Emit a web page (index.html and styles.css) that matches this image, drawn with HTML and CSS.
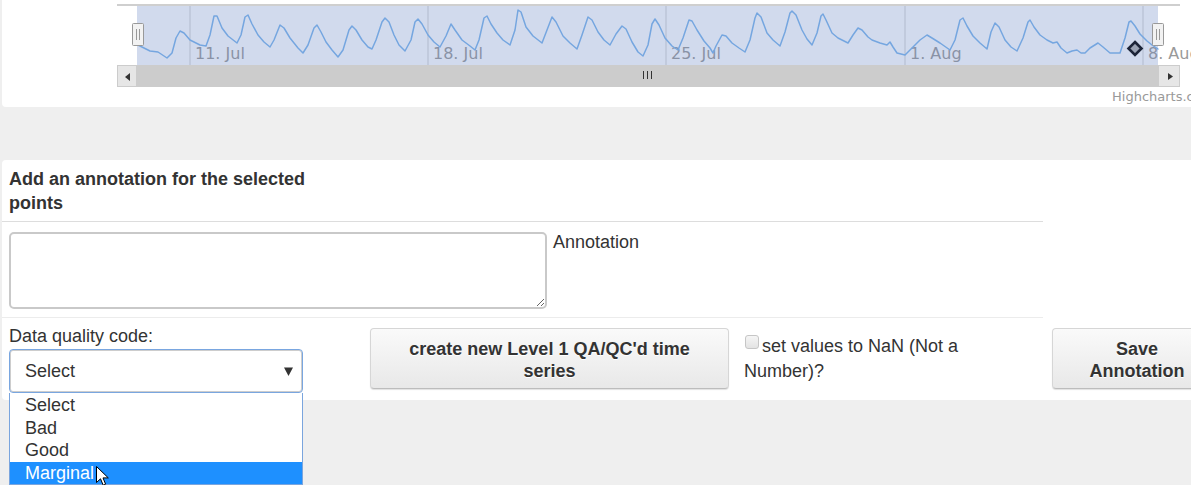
FILE: index.html
```html
<!DOCTYPE html>
<html>
<head>
<meta charset="utf-8">
<title>Annotation</title>
<link rel="stylesheet" href="styles.css">
</head>
<body>
<div class="chart-panel">
  <svg class="nav" width="1189" height="107" viewBox="2 0 1189 107" xmlns="http://www.w3.org/2000/svg">
    <path class="outline" d="M117 5 H1180"/>
    <g class="grid">
      <path d="M190 6 V65"/>
      <path d="M428 6 V65"/>
      <path d="M666 6 V65"/>
      <path d="M905 6 V65"/>
      <path d="M1143 6 V65"/>
    </g>
    <text class="axis-label" x="195" y="59">11. Jul</text>
    <text class="axis-label" x="433" y="59">18. Jul</text>
    <text class="axis-label" x="671" y="59">25. Jul</text>
    <text class="axis-label" x="910" y="59">1. Aug</text>
    <text class="axis-label" x="1148" y="59">8. Aug</text>
    <polyline class="series" points="138,45 142,47 146,49 150,51 158,52 167,58 172,53 176,38 180,31 184,33 190,40 200,45 206,46 210,35 214,16 217,16 222,28 228,36 237,43 241,35 245,17 248,15 252,24 258,35 264,42 270,47 274,40 280,25 284,28 290,38 298,48 303,53 308,45 314,28 317,25 321,32 326,42 332,50 338,57 343,50 349,30 352,26 356,30 362,40 368,47 372,49 376,40 382,22 385,18 389,22 394,35 399,45 405,51 411,40 415,22 418,19 422,24 428,35 434,42 440,47 446,36 451,24 455,30 462,40 470,46 475,50 479,40 484,18 487,16 491,24 497,33 503,40 510,45 515,30 518,10 521,12 526,27 533,36 542,43 547,30 552,17 556,22 563,36 570,43 577,49 582,35 588,17 592,20 598,32 604,40 610,45 616,34 622,26 626,29 632,42 638,52 643,56 648,45 652,24 655,19 659,25 665,38 672,46 678,50 683,38 689,20 692,21 697,30 704,41 710,48 713,53 716,46 722,35 726,36 732,43 739,48 745,52 750,40 755,18 757,13 761,17 767,33 773,40 780,46 785,32 790,13 792,11 796,15 802,30 807,39 812,45 817,33 821,16 823,14 826,20 832,33 838,38 848,43 853,35 858,28 862,30 868,37 872,40 880,43 887,45 890,42 893,47 897,53 905,55 912,48 920,40 927,35 932,38 940,43 950,50 955,40 960,20 963,18 967,26 973,36 980,43 987,49 991,32 995,23 999,27 1005,40 1011,47 1017,51 1023,38 1028,22 1030,20 1034,27 1040,35 1047,40 1053,43 1057,42 1061,48 1067,53 1072,51 1077,50 1081,53 1085,53 1090,48 1098,43 1103,47 1110,53 1120,53 1125,38 1129,22 1131,21 1135,26 1140,34 1147,41 1152,45 1158,49"/>
    <rect class="mask" x="137" y="6" width="1021" height="59"/>
    <path class="marker" d="M1135 42 L1141.5 48.5 L1135 55 L1128.5 48.5 Z"/>
    <g class="handle">
      <rect x="132.5" y="23.5" width="11" height="22" rx="1"/>
      <path d="M136.5 29 V40 M139.5 29 V40"/>
    </g>
    <g class="handle">
      <rect x="1152.5" y="23.5" width="11" height="22" rx="1"/>
      <path d="M1156.5 29 V40 M1159.5 29 V40"/>
    </g>
    <rect class="sb-track" x="137" y="65" width="1021" height="22"/>
    <rect class="sb-button" x="117.5" y="65.5" width="19" height="21"/>
    <rect class="sb-button" x="1158.5" y="65.5" width="21" height="21"/>
    <polygon class="sb-arrow" points="125,77 130,73 130,81"/>
    <polygon class="sb-arrow" points="1168,73 1173,76.5 1168,80"/>
    <path class="rifle" d="M643.5 71 V79 M647.5 71 V79 M651.5 71 V79"/>
    <text class="credit" x="1112" y="101">Highcharts.com</text>
  </svg>
</div>

<div class="annot-panel">
  <h4 class="annot-title">Add an annotation for the selected points</h4>
  <div class="rule"></div>
  <div class="row-text">
    <textarea class="annot-input"></textarea>
    <label class="annot-label">Annotation</label>
  </div>
  <div class="rule rule-light"></div>
  <div class="row-controls">
    <div class="col-quality">
      <div class="field-label">Data quality code:</div>
      <div class="select-box">
        <span>Select</span>
        <svg class="caret" width="9" height="9" viewBox="0 0 9 9"><polygon points="0,0.5 9,0.5 4.5,9"/></svg>
      </div>
    </div>
    <button class="btn btn-create">create new Level 1 QA/QC'd time series</button>
    <div class="col-nan"><span class="check"></span>set values to NaN (Not a Number)?</div>
    <button class="btn btn-save">Save Annotation</button>
  </div>
  <ul class="dropdown">
    <li>Select</li>
    <li>Bad</li>
    <li>Good</li>
    <li class="active">Marginal</li>
  </ul>
</div>

<svg class="cursor" width="14" height="22" viewBox="0 0 14 22">
  <path d="M0.5 0.5 L0.5 16.5 L4.5 12.8 L7.2 19.2 L9.6 18.2 L7 11.9 L12.3 11.9 Z"/>
</svg>
</body>
</html>
```

FILE: styles.css
```css
html, body {
  margin: 0;
  height: 100%;
  overflow: hidden;
}

body {
  background: #efefef;
  padding-left: 2px;
  font-family: "Liberation Sans", Arial, sans-serif;
  font-size: 18px;
  color: #333;
}

/* ---------- chart navigator ---------- */
.chart-panel {
  background: #fff;
  height: 107px;
  border-radius: 0 0 0 4px;
}

.nav {
  display: block;
}

.outline {
  stroke: #cfcfcf;
  stroke-width: 2;
  fill: none;
}

.grid path {
  stroke: #e3e3e3;
  stroke-width: 1.6;
  fill: none;
}

.axis-label {
  font-family: "DejaVu Sans", sans-serif;
  font-size: 16px;
  fill: #999;
}

.series {
  fill: none;
  stroke: #7cb5ec;
  stroke-width: 1.5;
  stroke-linejoin: round;
  stroke-linecap: round;
}

.mask {
  fill: rgba(102, 133, 194, 0.3);
}

.marker {
  fill: #9aa2b3;
  stroke: #1c2438;
  stroke-width: 2.6;
  stroke-linejoin: miter;
}

.handle rect {
  fill: #f2f2f2;
  stroke: #999;
  stroke-width: 1;
}

.handle path {
  stroke: #999;
  stroke-width: 1;
  fill: none;
}

.sb-track {
  fill: #cccccc;
}

.sb-button {
  fill: #e6e6e6;
  stroke: #cccccc;
  stroke-width: 1;
}

.sb-arrow {
  fill: #333;
}

.rifle {
  stroke: #333;
  stroke-width: 1;
  fill: none;
}

.credit {
  font-family: "DejaVu Sans", sans-serif;
  font-size: 13px;
  fill: #999;
}

/* ---------- annotation panel ---------- */
.annot-panel {
  position: relative;
  margin-top: 53px;
  height: 240px;
  box-sizing: border-box;
  padding-top: 7px;
  background: #fff;
  border-radius: 4px 0 0 4px;
}

.annot-title {
  margin: 0 0 0 7px;
  width: 330px;
  font-size: 18px;
  line-height: 24px;
  font-weight: bold;
  color: #333;
}

.rule {
  margin-top: 6px;
  width: 1041px;
  height: 1px;
  background: #dddddd;
}

.rule-light {
  margin-top: 8px;
  background: #ececec;
}

.row-text {
  display: flex;
  align-items: flex-start;
  margin: 10px 0 0 7px;
}

.annot-input {
  display: block;
  width: 538px;
  height: 77px;
  box-sizing: border-box;
  margin: 0;
  padding: 6px 12px;
  border: 2px solid #c9c9c9;
  border-radius: 5px;
  font: inherit;
  background: #fff;
}

.annot-label {
  margin-left: 6px;
  line-height: 20px;
}

.row-controls {
  display: flex;
  align-items: flex-start;
  margin-left: 7px;
  padding-top: 6px;
}

.row-controls > * {
  flex-shrink: 0;
}

.col-quality {
  width: 294px;
}

.field-label {
  line-height: 25px;
}

.select-box {
  display: flex;
  align-items: center;
  justify-content: space-between;
  height: 44px;
  box-sizing: border-box;
  padding: 0 9px 0 15px;
  border: 1px solid #79a6e0;
  border-radius: 4px;
  box-shadow: inset 0 0 0 1px #cdcdcd;
  background: #fff;
  line-height: 22px;
}

.caret {
  display: block;
  fill: #333;
}

.btn {
  height: 61px;
  box-sizing: border-box;
  margin-top: 4px;
  padding: 9px 16px 6px;
  font-family: "Liberation Sans", Arial, sans-serif;
  font-size: 18px;
  line-height: 22px;
  font-weight: bold;
  color: #333;
  text-align: center;
  text-shadow: 0 1px 0 #fff;
  background: linear-gradient(#fafafa, #e8e8e8);
  border: 1px solid #d6d6d6;
  border-bottom-color: #bcbcbc;
  border-radius: 4px;
  box-shadow: 0 1px 1px rgba(0, 0, 0, 0.12);
}

.btn-create {
  width: 359px;
  margin-left: 67px;
}

.col-nan {
  width: 290px;
  margin-left: 15px;
  margin-top: 10px;
  line-height: 25px;
}

.check {
  display: inline-block;
  width: 14px;
  height: 14px;
  box-sizing: border-box;
  margin: 0 3px 0 1px;
  vertical-align: 3px;
  border: 1px solid #c6c6c6;
  border-radius: 3px;
  background: linear-gradient(#f5f5f5, #e3e3e3);
}

.btn-save {
  width: 170px;
  margin-left: 18px;
}

/* ---------- open dropdown ---------- */
.dropdown {
  position: absolute;
  left: 7px;
  top: 233px;
  width: 294px;
  box-sizing: border-box;
  margin: 0;
  padding: 1px 0 0;
  list-style: none;
  background: #fff;
  border: 1px solid #7aa5de;
  border-top: none;
}

.dropdown li {
  height: 22.5px;
  line-height: 22.5px;
  padding-left: 15px;
}

.dropdown li.active {
  background: #1e90ff;
  color: #fff;
}

.cursor {
  position: absolute;
  left: 96px;
  top: 466px;
}

.cursor path {
  fill: #fff;
  stroke: #000;
  stroke-width: 1;
  stroke-linejoin: miter;
}
```
